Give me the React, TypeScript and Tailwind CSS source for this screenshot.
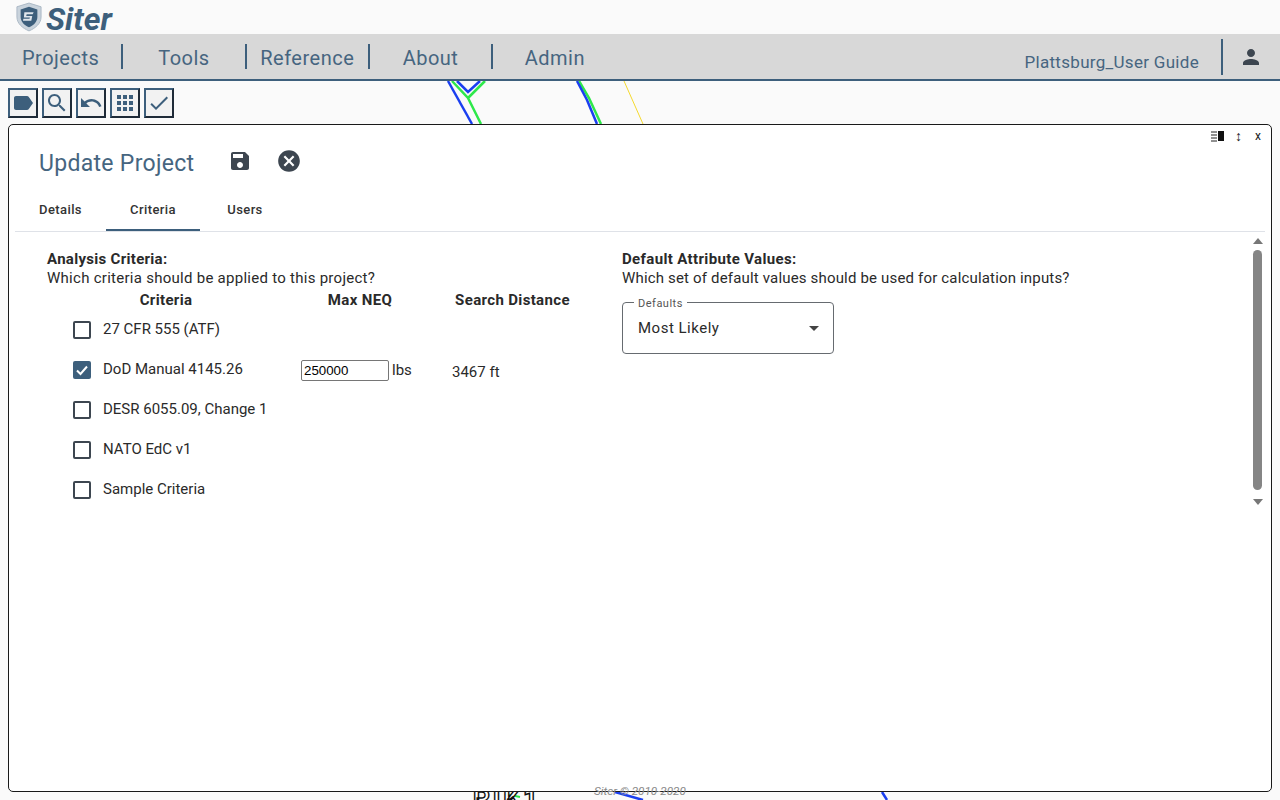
import React from 'react';

const ICONS = {
  label: "M17.63 5.84C17.27 5.33 16.67 5 16 5L5 5.01C3.9 5.01 3 5.9 3 7v10c0 1.1.9 1.99 2 1.99L16 19c.67 0 1.27-.33 1.63-.84L22 12l-4.37-6.16z",
  search: "M15.5 14h-.79l-.28-.27C15.41 12.59 16 11.11 16 9.5 16 5.91 13.09 3 9.5 3S3 5.91 3 9.5 5.91 16 9.5 16c1.61 0 3.09-.59 4.23-1.57l.27.28v.79l5 4.99L20.49 19l-4.99-5zm-6 0C7.01 14 5 11.99 5 9.5S7.01 5 9.5 5 14 7.01 14 9.5 11.99 14 9.5 14z",
  undo: "M12.5 8c-2.65 0-5.05.99-6.9 2.6L2 7v9h9l-3.62-3.62c1.39-1.16 3.16-1.88 5.12-1.88 3.54 0 6.55 2.31 7.6 5.5l2.37-.78C21.08 11.03 17.15 8 12.5 8z",
  apps: "M4 8h4V4H4v4zm6 12h4v-4h-4v4zm-6 0h4v-4H4v4zm0-6h4v-4H4v4zm6 0h4v-4h-4v4zm6-10v4h4V4h-4zm-6 4h4V4h-4v4zm6 6h4v-4h-4v4zm0 6h4v-4h-4v4z",
  check: "M9 16.17L4.83 12l-1.41 1.41L9 19 21 7l-1.41-1.41z",
  save: "M17 3H5c-1.11 0-2 .9-2 2v14c0 1.1.89 2 2 2h14c1.1 0 2-.9 2-2V7l-4-4zm-5 16c-1.66 0-3-1.34-3-3s1.34-3 3-3 3 1.34 3 3-1.34 3-3 3zm3-10H5V5h10v4z",
  cancel: "M12 2C6.47 2 2 6.47 2 12s4.47 10 10 10 10-4.47 10-10S17.53 2 12 2zm5 13.59L15.59 17 12 13.41 8.41 17 7 15.59 10.59 12 7 8.41 8.41 7 12 10.59 15.59 7 17 8.41 13.41 12 17 15.59z",
  person: "M12 12c2.21 0 4-1.79 4-4s-1.79-4-4-4-4 1.79-4 4 1.79 4 4 4zm0 2c-2.67 0-8 1.34-8 4v2h16v-2c0-2.66-5.33-4-8-4z",
};

const Icon = ({ d, size = 24, className = "" }: { d: string; size?: number; className?: string }) => (
  <svg width={size} height={size} viewBox="0 0 24 24" className={className} fill="currentColor">
    <path d={d} />
  </svg>
);

const navItems = ["Projects", "Tools", "Reference", "About", "Admin"];
const toolButtons = [ICONS.label, ICONS.search, ICONS.undo, ICONS.apps, ICONS.check];
const criteria = ["27 CFR 555 (ATF)", "DoD Manual 4145.26", "DESR 6055.09, Change 1", "NATO EdC v1", "Sample Criteria"];

const MapLayer = () => (
  <svg className="absolute left-0 top-0" width="1280" height="800" fill="none">
    <path d="M457 81L468 92L480 81" stroke="#1a3ff0" strokeWidth="2.5" />
    <path d="M448 81L472 124" stroke="#1a3ff0" strokeWidth="2.5" />
    <path d="M452 81L468 98L481 124M468 98L485 81" stroke="#2ee84a" strokeWidth="2.5" />
    <path d="M579 81L589 98L601 124" stroke="#2ee84a" strokeWidth="2.5" />
    <path d="M577 81L587 100L597 124" stroke="#1a3ff0" strokeWidth="2.5" />
    <path d="M624 81L643 124" stroke="#f5d92e" strokeWidth="1" />
    <path d="M615 792L643 800M882 792L887 800" stroke="#1a3ff0" strokeWidth="2.5" />
    <path d="M505 794L520 797" stroke="#2ee84a" strokeWidth="2" />
    <text x="473" y="808" fontFamily="Roboto, sans-serif" fontWeight="700" fontSize="26" fill="#ffffff" stroke="#111111" strokeWidth="1.4" letterSpacing="3">PIK1</text>
  </svg>
);

const Logo = () => (
  <svg width="26" height="30" viewBox="0 0 28 32" className="ml-[16px] mt-[2px]">
    <path d="M14 1L27 5V16C27 23 21 28 14 31C7 28 1 23 1 16V5Z" fill="#c9d3dc" stroke="#a9b7c4" />
    <path d="M14 5L23 8V16C23 21 19 25 14 27C9 25 5 21 5 16V8Z" fill="#3d5f7c" />
    <path d="M9 11H19L18 13H11.5L11 15H17.5L16.5 20H7.5L8 18H14.5L15 16.500H8.500Z" fill="#dfe6ec" />
  </svg>
);

export default function App() {
  return (
    <div className="relative flex h-[800px] w-[1280px] flex-col overflow-hidden bg-[#fafafa] font-['Roboto',sans-serif] text-[#2a2a2a]">
      <MapLayer />

      <header className="relative flex h-[34px] items-start">
        <Logo />
        <span className="ml-[4px] text-[32px] font-bold italic leading-[38px] text-[#3d5f7c]">Siter</span>
      </header>

      <nav className="relative flex h-[47px] items-start border-b-2 border-[#3d5f7c] bg-[#d8d8d8] text-[#466580]">
        {navItems.map((item, i) => (
          <div
            key={item}
            className={
              i < navItems.length - 1
                ? "mt-[10px] flex h-[25px] w-[123.300px] items-center justify-center border-r-2 border-[#3d5f7c] pt-[2px] text-[20px] tracking-[0.5px]"
                : "mt-[10px] flex h-[25px] w-[123.300px] items-center justify-center pt-[2px] text-[20px] tracking-[0.5px]"
            }
          >
            {item}
          </div>
        ))}
        <div className="ml-auto mt-[16px] text-[17px] leading-[24px] tracking-[0.3px]">Plattsburg_User Guide</div>
        <div className="ml-[22px] mt-[5px] h-[36px] w-[2px] bg-[#3d5f7c]" />
        <div className="ml-[16px] mr-[17px] mt-[11px] text-[#3d4650]">
          <Icon d={ICONS.person} />
        </div>
      </nav>

      <main className="relative flex flex-1 flex-col px-2 pt-[7px]">
        <div className="flex gap-1">
          {toolButtons.map((d, i) => (
            <button key={i} className="flex h-[30px] w-[30px] items-center justify-center border-2 border-b-[#1f2b38] border-l-[#3d5f7c] border-r-[#1f2b38] border-t-[#3d5f7c] bg-[#f2f2f2] text-[#3d5f7c]">
              <Icon d={d} />
            </button>
          ))}
        </div>

        <section className="mt-[6px] flex h-[668px] flex-col rounded-[5px] border border-[#1a1a1a] bg-white">
          <div className="flex h-[22px] items-center justify-end text-[12px] text-[#222222]">
            <svg width="14" height="11" viewBox="0 0 14 11" className="mr-[10px]">
              <path d="M0 1H6M0 4H6M0 7H6M0 10H6" stroke="#222222" strokeWidth="1" />
              <rect x="7" y="0" width="6" height="10" fill="#111111" />
            </svg>
            <span className="mr-[13px] font-['Liberation_Sans',sans-serif] text-[14px]">↕</span>
            <span className="mr-[10px]">x</span>
          </div>

          <div className="flex h-[36px] items-center pl-[30px]">
            <h1 className="mb-[2px] text-[23px] tracking-[0.3px] text-[#466580]">Update Project</h1>
            <Icon d={ICONS.save} className="mb-[8px] ml-[34px] text-[#3d4650]" />
            <Icon d={ICONS.cancel} size={26} className="mb-[8px] ml-[24px] text-[#3d4650]" />
          </div>

          <div className="mx-[6px] mt-[7px] flex h-[42px] border-b border-[#dfe2e8] text-[13px] font-medium tracking-[0.4px] text-[#333333]">
            <div className="flex h-[41px] w-[91px] items-center justify-center border-b-2 border-transparent">Details</div>
            <div className="flex h-[41px] w-[94px] items-center justify-center border-b-2 border-[#3d5f7c]">Criteria</div>
            <div className="flex h-[41px] w-[90px] items-center justify-center border-b-2 border-transparent">Users</div>
          </div>

          <div className="flex h-[279px]">
            <div className="flex-1 pl-[38px] pt-[18px] text-[15px] leading-[19px]">
              <div className="flex">
                <div className="w-[575px]">
                  <div className="font-bold tracking-[0.3px]">Analysis Criteria:</div>
                  <div className="tracking-[0.27px]">Which criteria should be applied to this project?</div>
                  <div className="mt-[3px] grid grid-cols-[238px_150px_155px] font-bold tracking-[0.35px]">
                    <div className="text-center">Criteria</div>
                    <div className="text-center">Max NEQ</div>
                    <div className="text-center">Search Distance</div>
                  </div>
                  <div className="mt-[5px] flex flex-col">
                    {criteria.map((name, i) => (
                      <div key={name} className="grid h-[40px] grid-cols-[238px_150px_155px] items-start">
                        <div className="flex items-start">
                          <div className={
                            i === 1
                              ? "ml-[26px] mt-[6px] flex h-[18px] w-[18px] items-center justify-center rounded-[2px] bg-[#3d5f7c]"
                              : "ml-[26px] mt-[6px] h-[18px] w-[18px] rounded-[2px] border-2 border-[#3d4650]"
                          }>
                            {i === 1 && (
                              <svg width="18" height="18" viewBox="0 0 18 18" fill="none">
                                <path d="M4 9.500L7.500 13L14 5.500" stroke="#ffffff" strokeWidth="2" />
                              </svg>
                            )}
                          </div>
                          <span className="ml-[12px] mt-[5px]">{name}</span>
                        </div>
                        {i === 1 && (
                          <div className="mt-[5px] flex items-start pl-[16px]">
                            <input
                              readOnly
                              value="250000"
                              className="h-[21px] w-[88px] rounded-[2px] border border-[#767676] bg-white px-[2px] font-['Liberation_Sans',sans-serif] text-[13.300px] text-black"
                            />
                            <span className="ml-[3px] mt-px">lbs</span>
                          </div>
                        )}
                        {i === 1 && <div className="mt-[8px] pl-[17px]">3467 ft</div>}
                      </div>
                    ))}
                  </div>
                </div>

                <div className="w-[600px]">
                  <div className="font-bold tracking-[0.36px]">Default Attribute Values:</div>
                  <div className="tracking-[0.17px]">Which set of default values should be used for calculation inputs?</div>
                  <div className="relative mt-[14px] flex h-[52px] w-[212px] items-center justify-between rounded-[4px] border border-[#666b70] pl-[15px] pr-[14px] text-[15px] tracking-[0.5px]">
                    <span className="absolute left-[11px] top-[-6px] bg-white px-[4px] text-[11px] leading-[14px] text-[#555555]">Defaults</span>
                    <span className="mt-px">Most Likely</span>
                    <span className="h-0 w-0 border-x-[5.500px] border-t-[5.500px] border-x-transparent border-t-[#444444]" />
                  </div>
                </div>
              </div>
            </div>

            <div className="mr-[9px] flex w-[9px] flex-col items-center">
              <span className="mt-[6px] h-0 w-0 border-x-[5px] border-b-[6px] border-x-transparent border-b-[#777777]" />
              <span className="mt-[6px] h-[240px] w-[9px] rounded-full bg-[#858585]" />
              <span className="mt-[9px] h-0 w-0 border-x-[5px] border-t-[6px] border-x-transparent border-t-[#777777]" />
            </div>
          </div>
        </section>

        <div className="absolute left-[594px] top-[703px] text-[11.700px] italic leading-[14px] text-[#8a8a8a]">Siter © 2010-2020</div>
      </main>
    </div>
  );
}
